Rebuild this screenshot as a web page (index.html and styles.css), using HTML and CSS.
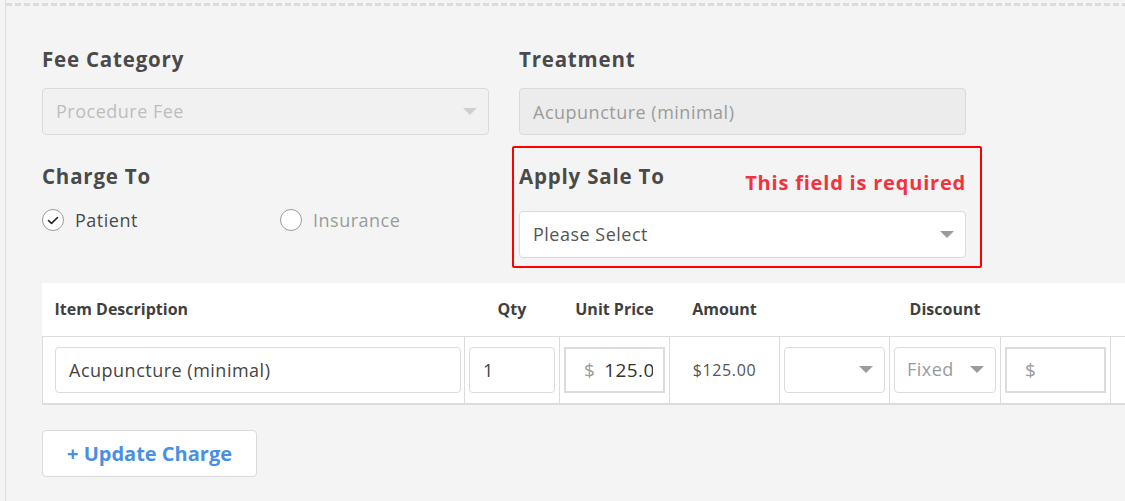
FILE: index.html
```html
<!DOCTYPE html>
<html lang="en">
<head>
<meta charset="utf-8">
<title>Update Charge</title>
<link rel="stylesheet" href="styles.css">
</head>
<body>
<div class="page">
  <div class="dash"></div>
  <div class="content">
    <div class="form-grid">
      <div class="field">
        <div class="label">Fee Category</div>
        <div class="select disabled"><span class="sel-text">Procedure Fee</span><span class="caret"></span></div>
      </div>
      <div class="field">
        <div class="label">Treatment</div>
        <div class="textbox disabled">Acupuncture (minimal)</div>
      </div>
      <div class="field">
        <div class="label">Charge To</div>
        <div class="radios">
          <div class="radio checked">
            <span class="circle"><svg width="12" height="9" viewBox="0 0 12 9"><path d="M1.5 4.5 L4.5 7.3 L10.5 1.5" fill="none" stroke="#222" stroke-width="1.6" stroke-linecap="round" stroke-linejoin="round"/></svg></span>
            <span>Patient</span>
          </div>
          <div class="radio off">
            <span class="circle"></span>
            <span>Insurance</span>
          </div>
        </div>
      </div>
      <div class="field error-field">
        <div class="label-row">
          <div class="label">Apply Sale To</div>
          <div class="err">This field is required</div>
        </div>
        <div class="select"><span class="sel-text">Please Select</span><span class="caret"></span></div>
        <div class="highlight"></div>
      </div>
    </div>

    <table class="items">
      <colgroup>
        <col class="c-desc"><col class="c-qty"><col class="c-110"><col class="c-110"><col class="c-110"><col class="c-111"><col class="c-110"><col class="c-110">
      </colgroup>
      <thead>
        <tr>
          <th class="left">Item Description</th>
          <th>Qty</th>
          <th>Unit Price</th>
          <th>Amount</th>
          <th colspan="3">Discount</th>
          <th></th>
        </tr>
      </thead>
      <tbody>
        <tr>
          <td class="desc-cell"><div class="cell-input">Acupuncture (minimal)</div></td>
          <td><div class="cell-input">1</div></td>
          <td><div class="money"><span class="dollar">$</span><span class="val">125.00</span></div></td>
          <td class="amount">$125.00</td>
          <td><div class="cell-select"><span class="sel-text"></span><span class="caret"></span></div></td>
          <td><div class="cell-select fixed"><span class="sel-text">Fixed</span><span class="caret"></span></div></td>
          <td><div class="money"><span class="dollar">$</span><span class="val"></span></div></td>
          <td></td>
        </tr>
      </tbody>
    </table>

    <button class="update-btn" type="button">+ Update Charge</button>
  </div>
</div>
</body>
</html>
```

FILE: styles.css
```css
* { box-sizing: border-box; }

html, body {
  margin: 0;
  height: 100%;
}

body {
  background: #f4f4f4;
  font-family: "Open Sans", "Liberation Sans", sans-serif;
  color: #4a4a4a;
  overflow: hidden;
}

.page {
  margin-left: 5px;
  border-left: 1px solid #dedede;
  min-height: 100%;
  overflow: hidden;
}

.dash {
  margin-top: 3px;
  height: 3px;
  background: repeating-linear-gradient(90deg, #dcdcdc 0 6px, transparent 6px 9px);
}

.content {
  padding: 41px 0 0 36px;
}

.form-grid {
  display: grid;
  grid-template-columns: 447px 447px;
  column-gap: 30px;
  row-gap: 29px;
}

.field {
  position: relative;
}

.label {
  font-size: 20.5px;
  font-weight: 700;
  line-height: 24px;
  color: #4a4a4a;
  letter-spacing: 0.8px;
}

.field > .label {
  margin-bottom: 17px;
}

.select,
.textbox {
  height: 47px;
  border: 1px solid #dadada;
  border-radius: 4px;
  background: #fff;
  display: flex;
  align-items: center;
  justify-content: space-between;
  padding: 0 11px 0 13px;
  font-size: 18px;
  color: #555;
  letter-spacing: 0.5px;
}

.sel-text {
  position: relative;
  top: -1px;
}

.select.disabled {
  background: #f1f1f1;
  color: #bdbdbd;
}

.textbox.disabled {
  background: #ececec;
  color: #9b9b9b;
}

.caret {
  width: 0;
  height: 0;
  border-left: 7px solid transparent;
  border-right: 7px solid transparent;
  border-top: 7px solid #9b9b9b;
}

.select.disabled .caret {
  border-top-color: #cfcfcf;
}

.radios {
  display: flex;
  margin-top: 21px;
}

.radio {
  display: flex;
  align-items: center;
  gap: 11px;
  font-size: 18px;
  color: #4a4a4a;
  line-height: 22px;
  letter-spacing: 0.5px;
}

.radio.checked {
  width: 238px;
}

.radio.off {
  color: #9b9b9b;
}

.circle {
  width: 22px;
  height: 22px;
  border-radius: 50%;
  border: 1px solid #9b9b9b;
  background: #fff;
  display: flex;
  align-items: center;
  justify-content: center;
}

.label-row {
  display: flex;
  justify-content: space-between;
  align-items: flex-start;
  margin-bottom: 16px;
}

.err {
  margin-top: 7px;
  font-size: 20px;
  font-weight: 700;
  line-height: 24px;
  color: #f2333d;
  letter-spacing: 0.8px;
}

.highlight {
  position: absolute;
  left: -7px;
  right: -16px;
  top: -18px;
  bottom: -10px;
  border: 2px solid #ff0000;
  border-radius: 2px;
  pointer-events: none;
}

.items {
  margin-top: 25px;
  border-collapse: collapse;
  table-layout: fixed;
  width: 1178px;
  background: #fff;
}

.c-desc { width: 422px; }
.c-qty { width: 95px; }
.c-110 { width: 110px; }
.c-111 { width: 111px; }

.items th {
  height: 53px;
  font-size: 16px;
  font-weight: 700;
  color: #3f3f3f;
  text-align: center;
  padding: 0;
  border-bottom: 1px solid #dcdcdc;
}

.items th.left {
  text-align: left;
  padding-left: 12px;
}

.items td {
  height: 67px;
  padding: 10px 4px;
  border: 1px solid #dcdcdc;
  border-bottom: 2px solid #dcdcdc;
  border-top: none;
  vertical-align: middle;
}

.items td.desc-cell {
  padding-left: 12px;
  padding-right: 3px;
}

.cell-input {
  height: 46px;
  border: 1px solid #dcdcdc;
  border-radius: 4px;
  display: flex;
  align-items: center;
  padding: 0 13px;
  font-size: 18px;
  color: #444;
  letter-spacing: 0.5px;
}

.money {
  height: 46px;
  border: 2px solid #dcdcdc;
  display: flex;
  align-items: center;
  padding: 0 10px 0 18px;
  font-size: 19px;
  letter-spacing: 0.4px;
  white-space: nowrap;
}

.money .dollar {
  color: #9b9b9b;
  margin-right: 9px;
  flex: none;
}

.money .val {
  color: #333;
  flex: 1;
  min-width: 0;
  overflow: hidden;
}

.amount {
  font-size: 16px;
  color: #555;
  text-align: center;
  letter-spacing: 0.6px;
}

.cell-select {
  height: 46px;
  border: 1px solid #dcdcdc;
  border-radius: 4px;
  display: flex;
  align-items: center;
  justify-content: space-between;
  padding: 0 11px 0 12px;
  font-size: 18px;
  color: #9b9b9b;
  letter-spacing: 0.5px;
}

.update-btn {
  display: block;
  margin-top: 25px;
  width: 215px;
  height: 47px;
  background: #fff;
  border: 1px solid #dadada;
  border-radius: 4px;
  font-family: inherit;
  font-size: 20px;
  font-weight: 700;
  color: #4a90e2;
  cursor: pointer;
}
```
